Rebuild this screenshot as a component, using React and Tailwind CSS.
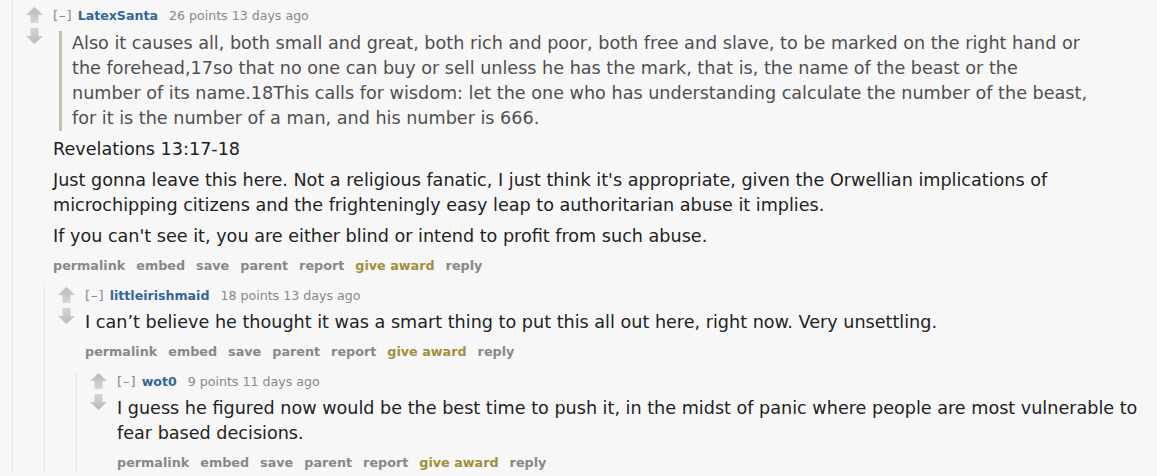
import React from 'react';

const comments = {
  author: 'LatexSanta',
  points: '26 points',
  age: '13 days ago',
  quote: [
    'Also it causes all, both small and great, both rich and poor, both free and slave, to be marked on the right hand or the forehead,17so that no one can buy or sell unless he has the mark, that is, the name of the beast or the number of its name.18This calls for wisdom: let the one who has understanding calculate the number of the beast, for it is the number of a man, and his number is 666.',
  ],
  body: [
    'Revelations 13:17-18',
    "Just gonna leave this here. Not a religious fanatic, I just think it's appropriate, given the Orwellian implications of microchipping citizens and the frighteningly easy leap to authoritarian abuse it implies.",
    "If you can't see it, you are either blind or intend to profit from such abuse.",
  ],
  replies: [
    {
      author: 'littleirishmaid',
      points: '18 points',
      age: '13 days ago',
      body: ['I can\u2019t believe he thought it was a smart thing to put this all out here, right now. Very unsettling.'],
      replies: [
        {
          author: 'wot0',
          points: '9 points',
          age: '11 days ago',
          body: ['I guess he figured now would be the best time to push it, in the midst of panic where people are most vulnerable to fear based decisions.'],
          replies: [],
        },
      ],
    },
  ],
};

const Arrow = ({ down }) => (
  <svg width="17" height="16" viewBox="0 0 17 16" className={down ? 'rotate-180' : ''}>
    <defs>
      <linearGradient id={down ? 'gd' : 'gu'} x1="0" y1="0" x2="0" y2="1">
        <stop offset="0" stopColor="#b9b9b9" />
        <stop offset="1" stopColor="#d6d6d6" />
      </linearGradient>
    </defs>
    <path d="M8.5 0 L17 8 L12.5 8 L12.5 16 L4.5 16 L4.5 8 L0 8 Z" fill={`url(#${down ? 'gd' : 'gu'})`} />
  </svg>
);

const Buttons = () => (
  <div className="flex gap-[11px] text-[12.75px] leading-[20px] font-bold text-[#888]">
    <span>permalink</span>
    <span>embed</span>
    <span>save</span>
    <span>parent</span>
    <span>report</span>
    <span className="text-[#a08f3b]">give award</span>
    <span>reply</span>
  </div>
);

const Comment = ({ c, top }) => (
  <div className={`border-l border-[#e6e6e6] ${top ? 'pt-[6px]' : 'mt-[10px]'}`}>
    <div className="flex">
      <div className="ml-[13px] w-[17px] pt-[1px] flex flex-col gap-[5px] shrink-0">
        <Arrow />
        <Arrow down />
      </div>
      <div className="ml-[10px] flex-1">
        <div className="flex items-baseline text-[12.6px] leading-[20px] text-[#888]">
          <span className="text-[#7b8699] text-[13px] tracking-[1px]">[–]</span>
          <span className="ml-[5px] font-bold text-[#336699]">{c.author}</span>
          <span className="ml-[11px]">{c.points} {c.age}</span>
        </div>
        <div className={`${top ? 'mt-[5px]' : 'mt-[4px]'} max-w-[1035px] text-[17.6px] leading-[25px] text-[#222] flex flex-col gap-[6px]`}>
          {c.quote && (
            <blockquote className="ml-[6px] border-l-[3px] border-[#c5c1ad] pl-[10px] text-[#4f4f4f]">
              {c.quote.map((q, i) => (
                <p key={i}>{q}</p>
              ))}
            </blockquote>
          )}
          {c.body.map((p, i) => (
            <p key={i}>{p}</p>
          ))}
        </div>
        <div className="mt-[7px]">
          <Buttons />
        </div>
      </div>
    </div>
    {c.replies.length > 0 && (
      <div className="ml-[31px]">
        {c.replies.map((r) => (
          <Comment key={r.author} c={r} />
        ))}
      </div>
    )}
  </div>
);

export default function App() {
  return (
    <div className="min-h-screen bg-[#f7f7f7] pl-[12px] font-['DejaVu_Sans',Verdana,sans-serif] overflow-hidden">
      <Comment c={comments} top />
    </div>
  );
}
